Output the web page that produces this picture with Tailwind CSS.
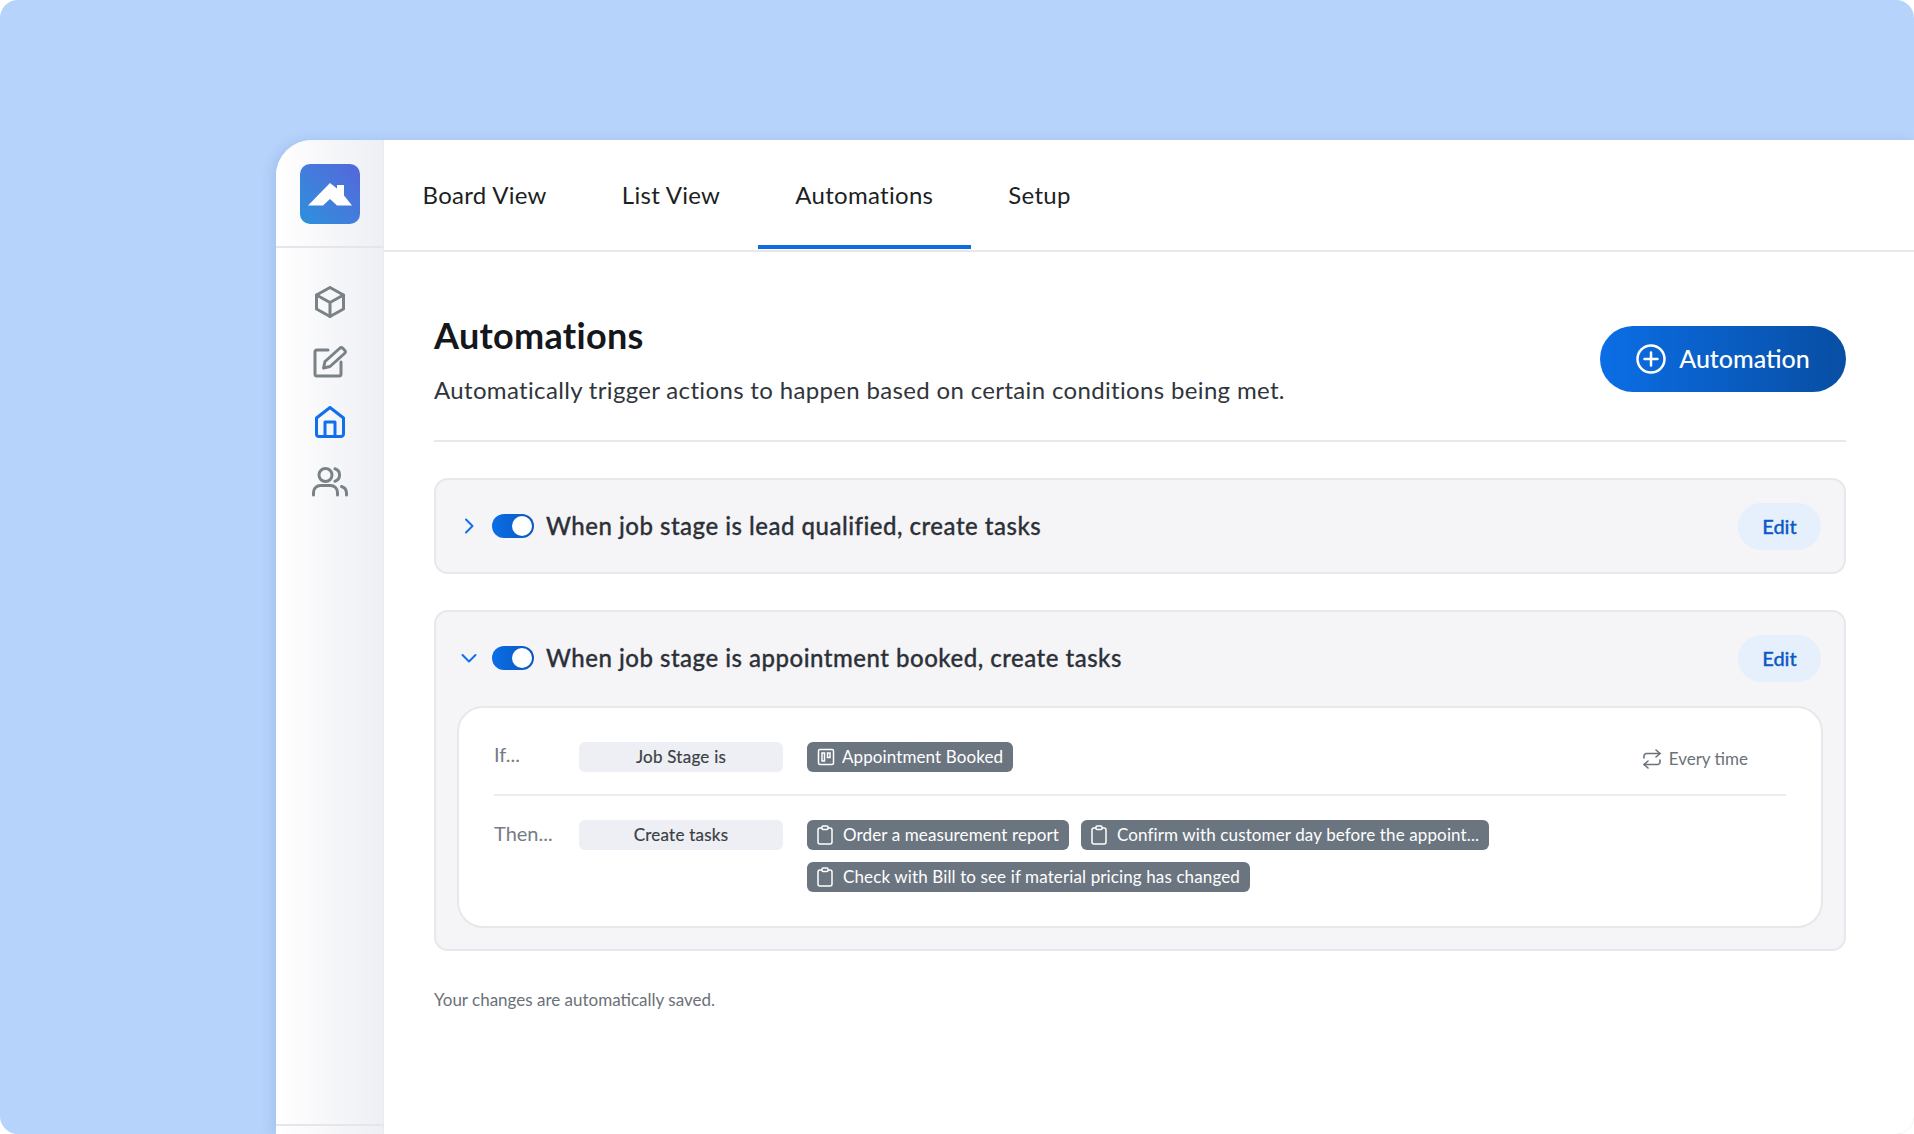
<!DOCTYPE html>
<html lang="en">
<head>
    <meta charset="UTF-8">
    <title>Automations</title>
    <script src="https://cdn.jsdelivr.net/npm/@tailwindcss/browser@4"></script>
</head>
<body class="bg-white overflow-hidden font-['Lato',sans-serif]">
    <div class="h-[1134px] bg-[#b6d3fb] rounded-[18px] pt-[140px] pl-[276px] overflow-hidden">
        <div class="flex h-[994px] bg-white rounded-tl-[36px] overflow-hidden shadow-[-4px_0_12px_rgba(60,100,170,0.15)]">

            <aside class="w-[108px] shrink-0 flex flex-col bg-gradient-to-r from-white to-[#eeeff5] border-r border-[#e9e9ef]">
                <div class="h-[108px] flex items-center justify-center border-b-2 border-[#e6e6ea]">
                    <svg width="60" height="60" viewBox="0 0 60 60" class="mt-[2px] rounded-[10px] bg-gradient-to-tr from-[#2791dc] to-[#5266db]">
                        <path fill="#fff" d="M8 41.500 30 19l7 5.500V21h7v10.500l8 10H37l-7-6.500-7 6.500z"/>
                    </svg>
                </div>
                <nav class="flex flex-col items-center mt-[38px]">
                    <svg width="30" height="32" viewBox="0 0 30 32" fill="none" stroke="#7b8287" stroke-width="3" stroke-linejoin="round" stroke-linecap="round">
                        <path d="M15 1.500 28.500 9v14L15 30.500 1.500 23V9z"/>
                        <path d="M1.500 9 15 16.500 28.500 9M15 16.500v14"/>
                    </svg>
                    <svg width="34" height="32" viewBox="0 0 34 32" fill="none" stroke="#7b8287" stroke-width="3" stroke-linejoin="round" stroke-linecap="round" class="mt-[28px]">
                        <path d="M15 4H4a2 2 0 0 0-2 2v22a2 2 0 0 0 2 2h22a2 2 0 0 0 2-2V16"/>
                        <path d="M10.500 22 12 15.500 26.500 2.500a2.500 2.500 0 0 1 3.500 0l1.500 1.500a2.500 2.500 0 0 1 0 3.500L17 20.500z"/>
                    </svg>
                    <svg width="30" height="32" viewBox="0 0 30 32" fill="none" stroke="#0f6fec" stroke-width="3" stroke-linejoin="round" stroke-linecap="round" class="mt-[28px]">
                        <path d="M15 1.500 28.500 12v16a2.500 2.500 0 0 1-2.500 2.500H4A2.500 2.500 0 0 1 1.500 28V12z"/>
                        <path d="M10 30V16h10v14"/>
                    </svg>
                    <svg width="36" height="30" viewBox="0 0 36 30" fill="none" stroke="#7b8287" stroke-width="3" stroke-linecap="round" stroke-linejoin="round" class="mt-[29px]">
                        <circle cx="13.500" cy="8" r="6.500"/>
                        <path d="M1.500 28v-2.500a7 7 0 0 1 7-7h10a7 7 0 0 1 7 7V28"/>
                        <path d="M23 1.800a6.500 6.500 0 0 1 0 12.400"/>
                        <path d="M34.500 28v-2a7 7 0 0 0-5-6.500"/>
                    </svg>
                </nav>
                <div class="mt-auto mb-[8px] border-t-2 border-[#e6e6ea]"></div>
            </aside>

            <main class="flex-1">
                <div class="h-[112px] flex border-b-2 border-[#e8e8ec] pl-[1px]">
                    <a class="px-[37.500px] h-[109px] pt-[4px] flex items-center text-[24px] tracking-[0.3px] text-[#1c1f24] border-b-4 border-transparent">Board View</a>
                    <a class="px-[37.500px] h-[109px] pt-[4px] flex items-center text-[24px] tracking-[0.3px] text-[#1c1f24] border-b-4 border-transparent">List View</a>
                    <a class="px-[37.500px] h-[109px] pt-[4px] flex items-center text-[24px] tracking-[0.3px] text-[#1c1f24] border-b-4 border-[#0f6be0]">Automations</a>
                    <a class="px-[37.500px] h-[109px] pt-[4px] flex items-center text-[24px] tracking-[0.3px] text-[#1c1f24] border-b-4 border-transparent">Setup</a>
                </div>

                <div class="pl-[50px] pr-[68px]">
                    <div class="flex justify-between border-b-2 border-[#e8e8ec] h-[190px] pt-[62px]">
                        <div>
                            <h1 class="text-[36px] leading-[46px] font-bold tracking-[0.3px] text-[#14171c] mt-[-2px]">Automations</h1>
                            <p class="text-[24px] leading-[32px] mt-[16px] tracking-[0.34px] text-[#30353c]">Automatically trigger actions to happen based on certain conditions being met.</p>
                        </div>
                        <button class="w-[246px] h-[66px] mt-[12px] rounded-full flex items-center justify-center gap-[13px] text-white text-[25px] font-medium bg-gradient-to-r from-[#0b6ee6] to-[#084ea3]">
                            <svg width="30" height="30" viewBox="0 0 30 30" fill="none" stroke="#fff" stroke-width="2.500" stroke-linecap="round">
                                <circle cx="15" cy="15" r="13.500"/>
                                <path d="M15 8.500v13M8.500 15h13"/>
                            </svg>
                            Automation
                        </button>
                    </div>

                    <section class="mt-[36px] h-[96px] flex items-center bg-[#f5f4f7] border-2 border-[#e8e7eb] rounded-[14px] pl-[26px] pr-[23px]">
                        <svg width="14" height="18" viewBox="0 0 14 18" fill="none" stroke="#0f6fec" stroke-width="2" stroke-linecap="round" stroke-linejoin="round">
                            <path d="m4 2.500 6.500 6.500L4 15.500"/>
                        </svg>
                        <div class="relative w-[42px] h-[24px] ml-[16px] rounded-full bg-gradient-to-r from-[#0b6ee6] to-[#0a58bd]">
                            <span class="absolute right-[2px] top-[2px] w-[20px] h-[20px] rounded-full bg-white"></span>
                        </div>
                        <h2 class="ml-[12px] text-[24px] font-medium tracking-[0.5px] [-webkit-text-stroke:0.3px] text-[#2c3138]">When job stage is lead qualified, create tasks</h2>
                        <button class="ml-auto w-[83px] h-[47px] rounded-full bg-[#e6effc] text-[#0c5bc4] text-[20px] font-medium [-webkit-text-stroke:0.3px]">Edit</button>
                    </section>

                    <section class="mt-[36px] bg-[#f5f4f7] border-2 border-[#e8e7eb] rounded-[14px] px-[21px] pb-[21px]">
                        <div class="h-[94px] pb-[2px] flex items-center">
                            <svg width="18" height="14" viewBox="0 0 18 14" fill="none" stroke="#0f6fec" stroke-width="2" stroke-linecap="round" stroke-linejoin="round" class="ml-[3px]">
                                <path d="m2.500 4 6.500 6.500L15.500 4"/>
                            </svg>
                            <div class="relative w-[42px] h-[24px] ml-[14px] rounded-full bg-gradient-to-r from-[#0b6ee6] to-[#0a58bd]">
                                <span class="absolute right-[2px] top-[2px] w-[20px] h-[20px] rounded-full bg-white"></span>
                            </div>
                            <h2 class="ml-[12px] text-[24px] font-medium tracking-[0.5px] [-webkit-text-stroke:0.3px] text-[#2c3138]">When job stage is appointment booked, create tasks</h2>
                            <button class="ml-auto mr-[2px] w-[83px] h-[47px] rounded-full bg-[#e6effc] text-[#0c5bc4] text-[20px] font-medium [-webkit-text-stroke:0.3px]">Edit</button>
                        </div>
                        <div class="h-[222px] bg-white border-2 border-[#e8e7eb] rounded-[26px] px-[35px] pt-[34px]">
                            <div class="flex items-start border-b-2 border-[#ededf0] h-[54px]">
                                <span class="w-[85px] mt-[-1px] text-[20px] leading-[26px] text-[#767c84]">If...</span>
                                <span class="w-[204px] h-[30px] flex items-center justify-center rounded-[6px] bg-[#eeeff4] text-[#3a3f46] text-[17px] tracking-[0.25px] [-webkit-text-stroke:0.2px]">Job Stage is</span>
                                <span class="ml-[24px] h-[30px] flex items-center gap-[7px] px-[10px] rounded-[6px] bg-[#6b7580] text-white text-[17px] tracking-[0.1px]">
                                    <svg width="18" height="18" viewBox="0 0 18 18" fill="none" stroke="#fff" stroke-width="1.500">
                                        <rect x="1.500" y="1.500" width="15" height="15" rx="1.500"/>
                                        <path d="M5 5h2.500v8H5zM10.500 5H13v4.500h-2.500z"/>
                                    </svg>
                                    Appointment Booked
                                </span>
                                <span class="ml-auto mr-[38px] mt-[4px] flex items-center gap-[8px] text-[17px] text-[#6b7178]">
                                    <svg width="18" height="20" viewBox="0 0 18 20" fill="none" stroke="#6b7178" stroke-width="1.600" stroke-linecap="round" stroke-linejoin="round">
                                        <path d="m13 1 4 3.500L13 8"/>
                                        <path d="M1 9V7a2.500 2.500 0 0 1 2.500-2.500H17"/>
                                        <path d="m5 19-4-3.500L5 12"/>
                                        <path d="M17 11v2a2.500 2.500 0 0 1-2.500 2.500H1"/>
                                    </svg>
                                    Every time
                                </span>
                            </div>
                            <div class="flex items-start mt-[24px]">
                                <span class="w-[85px] text-[20px] leading-[26px] text-[#767c84]">Then...</span>
                                <span class="w-[204px] h-[30px] flex items-center justify-center rounded-[6px] bg-[#eeeff4] text-[#3a3f46] text-[17px] tracking-[0.25px] [-webkit-text-stroke:0.2px]">Create tasks</span>
                                <div class="ml-[24px] flex flex-wrap gap-x-[12px] gap-y-[12px] w-[700px]">
                                    <span class="h-[30px] flex items-center gap-[10px] pl-[10px] pr-[10px] rounded-[6px] bg-[#6b7580] text-white text-[17px] tracking-[0.12px]">
                                        <svg width="16" height="20" viewBox="0 0 16 20" fill="none" stroke="#fff" stroke-width="1.500" stroke-linejoin="round">
                                            <rect x="1" y="3" width="14" height="16" rx="2"/>
                                            <rect x="5" y="1" width="6" height="3.500" rx="1" fill="#6b7580"/>
                                        </svg>
                                        Order a measurement report
                                    </span>
                                    <span class="h-[30px] flex items-center gap-[10px] pl-[10px] pr-[10px] rounded-[6px] bg-[#6b7580] text-white text-[17px] tracking-[0.12px]">
                                        <svg width="16" height="20" viewBox="0 0 16 20" fill="none" stroke="#fff" stroke-width="1.500" stroke-linejoin="round">
                                            <rect x="1" y="3" width="14" height="16" rx="2"/>
                                            <rect x="5" y="1" width="6" height="3.500" rx="1" fill="#6b7580"/>
                                        </svg>
                                        Confirm with customer day before the appoint...
                                    </span>
                                    <span class="h-[30px] flex items-center gap-[10px] pl-[10px] pr-[10px] rounded-[6px] bg-[#6b7580] text-white text-[17px] tracking-[0.12px]">
                                        <svg width="16" height="20" viewBox="0 0 16 20" fill="none" stroke="#fff" stroke-width="1.500" stroke-linejoin="round">
                                            <rect x="1" y="3" width="14" height="16" rx="2"/>
                                            <rect x="5" y="1" width="6" height="3.500" rx="1" fill="#6b7580"/>
                                        </svg>
                                        Check with Bill to see if material pricing has changed
                                    </span>
                                </div>
                            </div>
                        </div>
                    </section>

                    <p class="mt-[38px] text-[17px] leading-[22px] text-[#6b7178]">Your changes are automatically saved.</p>
                </div>
            </main>
        </div>
    </div>
</body>
</html>
